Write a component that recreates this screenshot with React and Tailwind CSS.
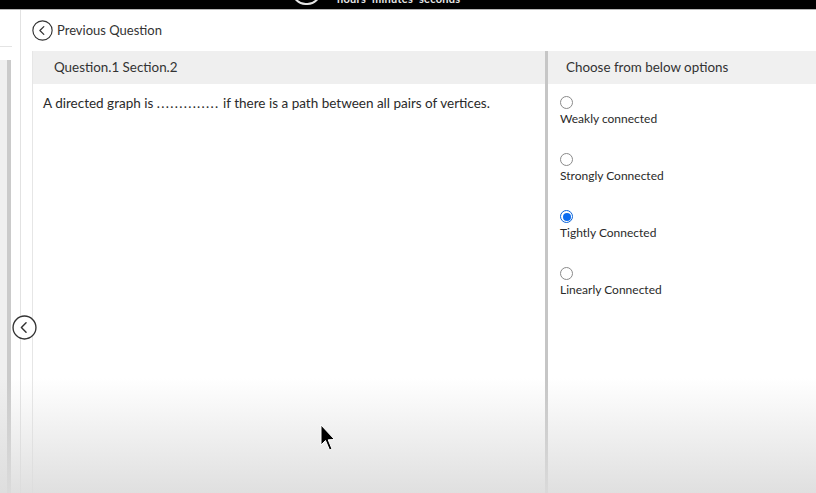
import React, { useState } from "react";

const font = { fontFamily: "Lato, 'Open Sans', sans-serif" };

const options = [
  "Weakly connected",
  "Strongly Connected",
  "Tightly Connected",
  "Linearly Connected",
];

function CircleBack({ size = 20, className = "" }) {
  return (
    <svg width={size} height={size} viewBox="0 0 24 24" className={className}>
      <circle cx="12" cy="12" r="11" fill="white" stroke="#333" strokeWidth="1.3" />
      <path d="M13.5 7.5 L9 12 L13.5 16.5" fill="none" stroke="#333" strokeWidth="1.4" strokeLinecap="round" strokeLinejoin="round" />
    </svg>
  );
}

function Radio({ checked }) {
  return (
    <span
      className={`flex h-[13px] w-[13px] items-center justify-center rounded-full border ${
        checked ? "border-[#0b64d8]" : "border-[#8a8a8a]"
      } bg-white`}
    >
      {checked && <span className="h-[8px] w-[8px] rounded-full bg-[#0b6cf0]" />}
    </span>
  );
}

export default function App() {
  const [selected, setSelected] = useState(2);

  return (
    <div className="relative flex h-[493px] w-[816px] flex-col overflow-hidden bg-white text-[#222]" style={font}>
      {/* timer bar, mostly scrolled off */}
      <div className="relative h-[10px] shrink-0 border-b border-[#b5b5b5] bg-black">
        <div className="absolute left-[292px] top-[-22px] h-[27px] w-[29px] rounded-full border-2 border-[#e6e6e6]" />
        <div className="absolute left-[337px] top-[-7px] text-[11px] font-bold leading-[12px] tracking-wide text-[#e6e6e6]">
          hours&nbsp; minutes&nbsp; seconds
        </div>
      </div>

      <div className="flex flex-1">
        {/* left rail */}
        <div className="flex w-[21px] shrink-0 flex-col border-r border-[#e2e2e2]">
          <div className="h-[37px] w-[12px] border-b border-[#e4e4e4]" />
          <div className="mt-[13px] flex flex-1">
            <div className="w-[7px] bg-[#efefef]" />
            <div className="w-[4px] bg-[#cacaca]" />
          </div>
        </div>
        <div className="w-[11px] shrink-0" />

        {/* main */}
        <div className="flex flex-1 flex-col">
          <div className="flex h-[41px] shrink-0 items-center gap-[4px]">
            <CircleBack size={21} />
            <span className="text-[13px] text-[#333]">Previous Question</span>
          </div>

          <div className="flex flex-1 border-l border-[#e6e6e6]">
            {/* question */}
            <div className="flex w-[512px] flex-col">
              <div className="flex h-[33px] items-center bg-[#efefef] pl-[21px] text-[13.4px] text-[#333]">
                Question.1 Section.2
              </div>
              <p className="pl-[10px] pt-[10px] text-[13.5px] leading-[18px] text-[#2a2a2a]">
                A directed graph is <span className="tracking-[1.3px]">..............</span> if there is a path between all pairs of vertices.
              </p>
            </div>

            <div className="w-[3px] bg-[#c6c6c6]" />

            {/* options */}
            <div className="flex flex-1 flex-col">
              <div className="flex h-[33px] items-center bg-[#f0f0f0] pl-[18px] text-[13.4px] text-[#333]">
                Choose from below options
              </div>
              <div className="flex flex-col gap-[26px] pl-[12px] pt-[12px]">
                {options.map((o, i) => (
                  <label key={o} className="flex cursor-pointer flex-col items-start" onClick={() => setSelected(i)}>
                    <Radio checked={selected === i} />
                    <span className="mt-[2px] text-[12px] leading-[16px] text-[#2a2a2a]">{o}</span>
                  </label>
                ))}
              </div>
            </div>
          </div>
        </div>
      </div>

      {/* collapse button on the rail */}
      <div className="absolute left-[12px] top-[315px]">
        <CircleBack size={25} />
      </div>

      {/* bottom fade */}
      <div className="pointer-events-none absolute bottom-0 left-0 h-[115px] w-full bg-gradient-to-b from-white/0 to-[#dcdcdc]/90" />

      {/* mouse pointer */}
      <svg className="pointer-events-none absolute left-[320px] top-[424px]" width="16" height="30" viewBox="0 0 16 30">
        <path d="M1 1 L1 21 L5.5 16.5 L9.5 26 L12 25 L8.2 15.8 L14.5 15.5 Z" fill="black" stroke="white" strokeWidth="1" />
      </svg>
    </div>
  );
}
